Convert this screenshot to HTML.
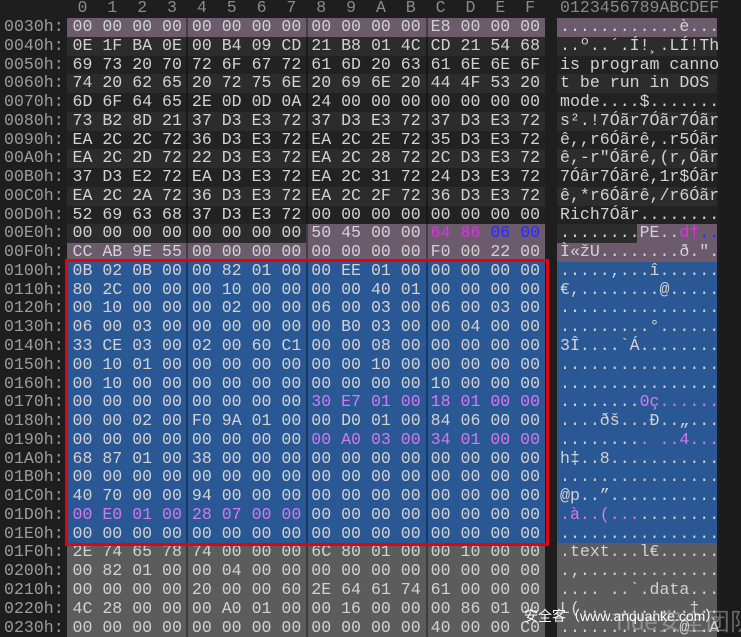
<!DOCTYPE html>
<html><head><meta charset="utf-8"><style>
html,body{margin:0;padding:0;background:#1e1e1e;width:741px;height:637px;overflow:hidden;position:relative;font-family:"Liberation Mono",monospace;font-size:16.58px;color:#d2d2d2}
#hdr{position:absolute;left:0;top:0;width:720px;height:18px;line-height:16px;color:#8a8a8a;white-space:pre}
#rows{position:absolute;left:0;top:18px;width:720px}
.r{position:relative;height:18.78px;line-height:18.78px;white-space:pre}
.hb{position:absolute;left:67px;width:478px;top:0;bottom:0;background:#222}
.ab{position:absolute;left:557px;width:160px;top:0;bottom:0;background:#222}
.L .hb,.L .ab{background:#2c2c2c}
.P .hb,.P .ab{background:#6b5b6d}
.B .hb,.B .ab{background:#2a5894}
.G .hb,.G .ab{background:#5c5c5c}
.ad{position:absolute;left:4px;top:0;color:#9c9c9c}
.hx{position:absolute;left:72.5px;top:0}
.as{position:absolute;left:560px;top:0}
.m{color:#e030e0}.bl{color:#2a2aff}.pp{color:#d478f0}
.sep{position:absolute;top:18px;width:2px;height:619px;background:rgba(0,0,0,.35)}
#red{position:absolute;left:65px;top:259px;width:478px;height:281px;border:3px solid #e8000b}
#sb{position:absolute;left:720px;top:0;width:21px;height:637px;background:#1a1a1a}
</style></head><body>
<div id="sb"></div>
<div id="hdr"><span style="position:absolute;left:77.5px">0  1  2  3  4  5  6  7  8  9  A  B  C  D  E  F</span><span style="position:absolute;left:560px">0123456789ABCDEF</span></div>
<div id="rows">
<div class="r P"><div class="hb"></div><div class="ab"></div><span class="ad">0030h:</span><span class="hx">00 00 00 00 00 00 00 00 00 00 00 00 E8 00 00 00</span><span class="as">............è...</span></div>
<div class="r L"><div class="hb"></div><div class="ab"></div><span class="ad">0040h:</span><span class="hx">0E 1F BA 0E 00 B4 09 CD 21 B8 01 4C CD 21 54 68</span><span class="as">..º..´.Í!¸.LÍ!Th</span></div>
<div class="r D"><div class="hb"></div><div class="ab"></div><span class="ad">0050h:</span><span class="hx">69 73 20 70 72 6F 67 72 61 6D 20 63 61 6E 6E 6F</span><span class="as">is program canno</span></div>
<div class="r L"><div class="hb"></div><div class="ab"></div><span class="ad">0060h:</span><span class="hx">74 20 62 65 20 72 75 6E 20 69 6E 20 44 4F 53 20</span><span class="as">t be run in DOS </span></div>
<div class="r D"><div class="hb"></div><div class="ab"></div><span class="ad">0070h:</span><span class="hx">6D 6F 64 65 2E 0D 0D 0A 24 00 00 00 00 00 00 00</span><span class="as">mode....$.......</span></div>
<div class="r L"><div class="hb"></div><div class="ab"></div><span class="ad">0080h:</span><span class="hx">73 B2 8D 21 37 D3 E3 72 37 D3 E3 72 37 D3 E3 72</span><span class="as">s².!7Óãr7Óãr7Óãr</span></div>
<div class="r D"><div class="hb"></div><div class="ab"></div><span class="ad">0090h:</span><span class="hx">EA 2C 2C 72 36 D3 E3 72 EA 2C 2E 72 35 D3 E3 72</span><span class="as">ê,,r6Óãrê,.r5Óãr</span></div>
<div class="r L"><div class="hb"></div><div class="ab"></div><span class="ad">00A0h:</span><span class="hx">EA 2C 2D 72 22 D3 E3 72 EA 2C 28 72 2C D3 E3 72</span><span class="as">ê,-r"Óãrê,(r,Óãr</span></div>
<div class="r D"><div class="hb"></div><div class="ab"></div><span class="ad">00B0h:</span><span class="hx">37 D3 E2 72 EA D3 E3 72 EA 2C 31 72 24 D3 E3 72</span><span class="as">7Óâr7Óãrê,1r$Óãr</span></div>
<div class="r L"><div class="hb"></div><div class="ab"></div><span class="ad">00C0h:</span><span class="hx">EA 2C 2A 72 36 D3 E3 72 EA 2C 2F 72 36 D3 E3 72</span><span class="as">ê,*r6Óãrê,/r6Óãr</span></div>
<div class="r D"><div class="hb"></div><div class="ab"></div><span class="ad">00D0h:</span><span class="hx">52 69 63 68 37 D3 E3 72 00 00 00 00 00 00 00 00</span><span class="as">Rich7Óãr........</span></div>
<div class="r L"><div class="hb"></div><div class="ab"></div><div style="position:absolute;left:306px;width:239px;top:0;bottom:0;background:#6b5b6d"></div><div style="position:absolute;left:637px;width:80px;top:0;bottom:0;background:#6b5b6d"></div><span class="ad">00E0h:</span><span class="hx">00 00 00 00 00 00 00 00 50 45 00 00 <span class="m">64 86</span> <span class="bl">06 00</span></span><span class="as">........PE..<span class="m">d†</span><span class="bl">..</span></span></div>
<div class="r P"><div class="hb"></div><div class="ab"></div><span class="ad">00F0h:</span><span class="hx">CC AB 9E 55 00 00 00 00 00 00 00 00 F0 00 22 00</span><span class="as">Ì«žU........ð.".</span></div>
<div class="r B"><div class="hb"></div><div class="ab"></div><span class="ad">0100h:</span><span class="hx">0B 02 0B 00 00 82 01 00 00 EE 01 00 00 00 00 00</span><span class="as">.....‚...î......</span></div>
<div class="r B"><div class="hb"></div><div class="ab"></div><span class="ad">0110h:</span><span class="hx">80 2C 00 00 00 10 00 00 00 00 40 01 00 00 00 00</span><span class="as">€,........@.....</span></div>
<div class="r B"><div class="hb"></div><div class="ab"></div><span class="ad">0120h:</span><span class="hx">00 10 00 00 00 02 00 00 06 00 03 00 06 00 03 00</span><span class="as">................</span></div>
<div class="r B"><div class="hb"></div><div class="ab"></div><span class="ad">0130h:</span><span class="hx">06 00 03 00 00 00 00 00 00 B0 03 00 00 04 00 00</span><span class="as">.........°......</span></div>
<div class="r B"><div class="hb"></div><div class="ab"></div><span class="ad">0140h:</span><span class="hx">33 CE 03 00 02 00 60 C1 00 00 08 00 00 00 00 00</span><span class="as">3Î....`Á........</span></div>
<div class="r B"><div class="hb"></div><div class="ab"></div><span class="ad">0150h:</span><span class="hx">00 10 01 00 00 00 00 00 00 00 10 00 00 00 00 00</span><span class="as">................</span></div>
<div class="r B"><div class="hb"></div><div class="ab"></div><span class="ad">0160h:</span><span class="hx">00 10 00 00 00 00 00 00 00 00 00 00 10 00 00 00</span><span class="as">................</span></div>
<div class="r B"><div class="hb"></div><div class="ab"></div><span class="ad">0170h:</span><span class="hx">00 00 00 00 00 00 00 00 <span class="pp">30 E7 01 00 18 01 00 00</span></span><span class="as">........<span class="pp">0ç......</span></span></div>
<div class="r B"><div class="hb"></div><div class="ab"></div><span class="ad">0180h:</span><span class="hx">00 00 02 00 F0 9A 01 00 00 D0 01 00 84 06 00 00</span><span class="as">....ðš...Ð..„...</span></div>
<div class="r B"><div class="hb"></div><div class="ab"></div><span class="ad">0190h:</span><span class="hx">00 00 00 00 00 00 00 00 <span class="pp">00 A0 03 00 34 01 00 00</span></span><span class="as">........<span class="pp">. ..4...</span></span></div>
<div class="r B"><div class="hb"></div><div class="ab"></div><span class="ad">01A0h:</span><span class="hx">68 87 01 00 38 00 00 00 00 00 00 00 00 00 00 00</span><span class="as">h‡..8...........</span></div>
<div class="r B"><div class="hb"></div><div class="ab"></div><span class="ad">01B0h:</span><span class="hx">00 00 00 00 00 00 00 00 00 00 00 00 00 00 00 00</span><span class="as">................</span></div>
<div class="r B"><div class="hb"></div><div class="ab"></div><span class="ad">01C0h:</span><span class="hx">40 70 00 00 94 00 00 00 00 00 00 00 00 00 00 00</span><span class="as">@p..”...........</span></div>
<div class="r B"><div class="hb"></div><div class="ab"></div><span class="ad">01D0h:</span><span class="hx"><span class="pp">00 E0 01 00 28 07 00 00</span> 00 00 00 00 00 00 00 00</span><span class="as"><span class="pp">.à..(...</span>........</span></div>
<div class="r B"><div class="hb"></div><div class="ab"></div><span class="ad">01E0h:</span><span class="hx">00 00 00 00 00 00 00 00 00 00 00 00 00 00 00 00</span><span class="as">................</span></div>
<div class="r G"><div class="hb"></div><div class="ab"></div><span class="ad">01F0h:</span><span class="hx">2E 74 65 78 74 00 00 00 6C 80 01 00 00 10 00 00</span><span class="as">.text...l€......</span></div>
<div class="r G"><div class="hb"></div><div class="ab"></div><span class="ad">0200h:</span><span class="hx">00 82 01 00 00 04 00 00 00 00 00 00 00 00 00 00</span><span class="as">.‚..............</span></div>
<div class="r G"><div class="hb"></div><div class="ab"></div><span class="ad">0210h:</span><span class="hx">00 00 00 00 20 00 00 60 2E 64 61 74 61 00 00 00</span><span class="as">.... ..`.data...</span></div>
<div class="r G"><div class="hb"></div><div class="ab"></div><span class="ad">0220h:</span><span class="hx">4C 28 00 00 00 A0 01 00 00 16 00 00 00 86 01 00</span><span class="as">L(... .......†..</span></div>
<div class="r G"><div class="hb"></div><div class="ab"></div><span class="ad">0230h:</span><span class="hx">00 00 00 00 00 00 00 00 00 00 00 00 40 00 00 C0</span><span class="as">............@..À</span></div>
</div>
<div class="sep" style="left:185.5px"></div>
<div class="sep" style="left:305.5px"></div>
<div class="sep" style="left:425.5px"></div>
<div id="red"></div>
<div style="position:absolute;left:612px;top:602px;font-family:'Liberation Sans','Noto Sans CJK SC',sans-serif;font-size:24px;color:rgba(200,200,200,.45);white-space:nowrap">Tide安全团队</div>
<div style="position:absolute;left:524px;top:606px;font-family:'Liberation Sans','Noto Sans CJK SC',sans-serif;font-size:14px;color:#fff;white-space:nowrap">安全客（www.anquanke.com）</div>
</body></html>
